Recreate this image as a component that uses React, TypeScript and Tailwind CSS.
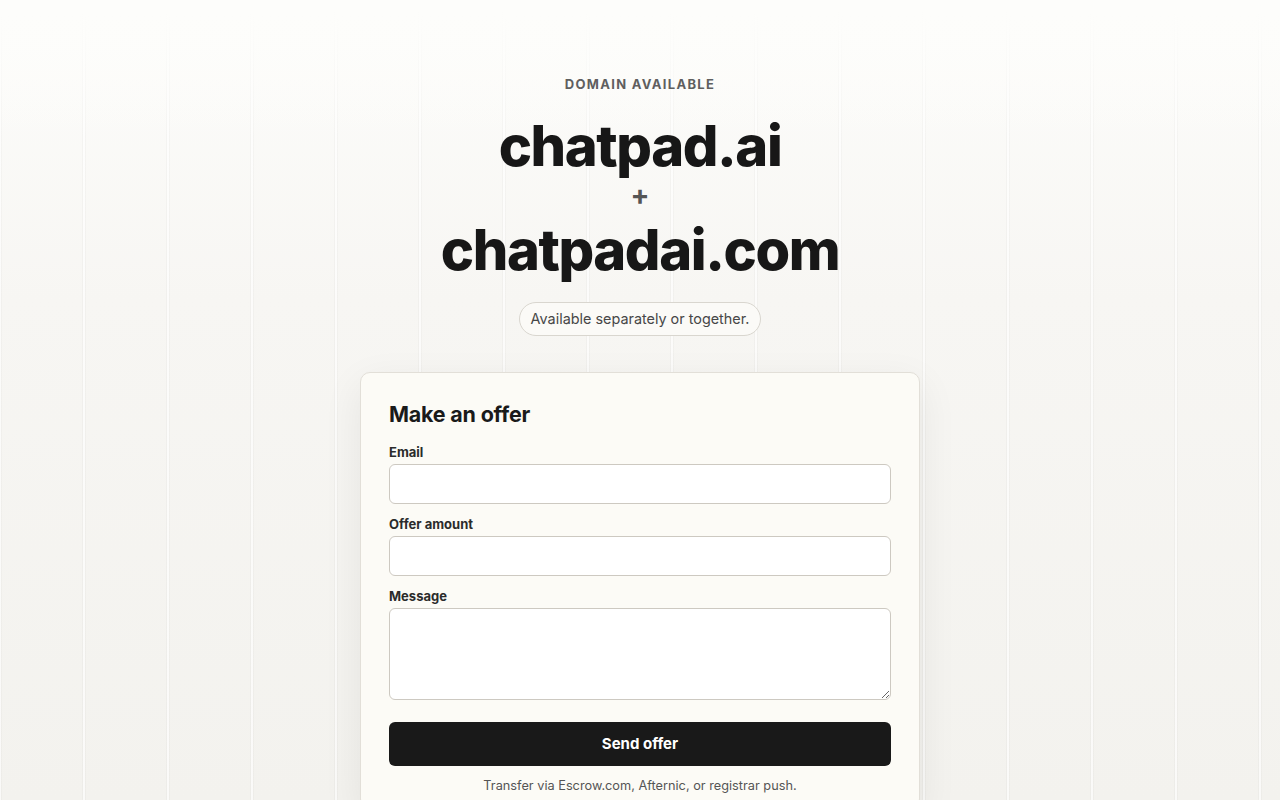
import React from "react";

export default function App() {
  return (
    <div
      className="min-h-[800px] w-full font-['Inter',_'Noto_Sans',_sans-serif] text-[#1a1a1a] bg-[image:linear-gradient(180deg,#fdfdfb_10px,rgba(253,253,251,0)_140px),repeating-linear-gradient(90deg,rgba(255,255,255,0.6)_0px,rgba(255,255,255,0.6)_1px,rgba(0,0,0,0.022)_1px,rgba(0,0,0,0.022)_2px,transparent_2px,transparent_82px,rgba(0,0,0,0.022)_82px,rgba(0,0,0,0.022)_83px,rgba(255,255,255,0.6)_83px,rgba(255,255,255,0.6)_84px),linear-gradient(180deg,#fdfdfb_0px,#f7f6f3_300px,#f3f2ee_800px)]"
    >
      <div className="flex flex-col items-center pt-[74px]">
        <div className="text-[13px] leading-5 font-bold tracking-[0.1em] text-[#5f5f5f]">
          DOMAIN AVAILABLE
        </div>
        <h1 className="mt-6 text-[56px] leading-[56px] font-extrabold tracking-[-0.025em] text-[#171717]">
          chatpad.ai
        </h1>
        <div className="h-12 pb-1.5 flex items-center justify-center text-[28px] leading-none font-bold text-[#555]">
          +
        </div>
        <h1 className="text-[56px] leading-[56px] font-extrabold tracking-[-0.025em] text-[#171717]">
          chatpadai.com
        </h1>
        <div className="mt-6 h-[34px] px-[11px] flex items-center rounded-full border border-[#d9d6cf] bg-[#fbfaf7] text-[14.4px] text-[#474747]">
          Available separately or together.
        </div>

        <div className="mt-9 w-[560px] rounded-[10px] border border-[#e2dfd8] bg-[#fcfbf6] px-7 pt-[27px] pb-3 shadow-[0_12px_40px_rgba(0,0,0,0.07)]">
          <h2 className="text-[21.5px] leading-7 font-bold tracking-[-0.01em] text-[#1a1a1a]">
            Make an offer
          </h2>
          <label className="mt-4 mb-1 block text-[13px] leading-4 font-bold text-[#2b2b2b]">
            Email
          </label>
          <input
            type="email"
            className="block h-10 w-full rounded-md border border-[#cdc9c1] bg-white px-3 text-[15px] outline-none"
          />
          <label className="mt-3 mb-1 block text-[13px] leading-4 font-bold text-[#2b2b2b]">
            Offer amount
          </label>
          <input
            type="text"
            className="block h-10 w-full rounded-md border border-[#cdc9c1] bg-white px-3 text-[15px] outline-none"
          />
          <label className="mt-3 mb-1 block text-[13px] leading-4 font-bold text-[#2b2b2b]">
            Message
          </label>
          <textarea className="block h-[92px] w-full rounded-md border border-[#cdc9c1] bg-white px-3 py-2 text-[15px] outline-none" />
          <button className="mt-[22px] flex h-11 w-full items-center justify-center rounded-md bg-[#191919] text-[15px] font-bold text-white">
            Send offer
          </button>
          <p className="mt-[10px] text-center text-[12.75px] leading-5 text-[#555]">
            Transfer via Escrow.com, Afternic, or registrar push.
          </p>
        </div>
      </div>
    </div>
  );
}
